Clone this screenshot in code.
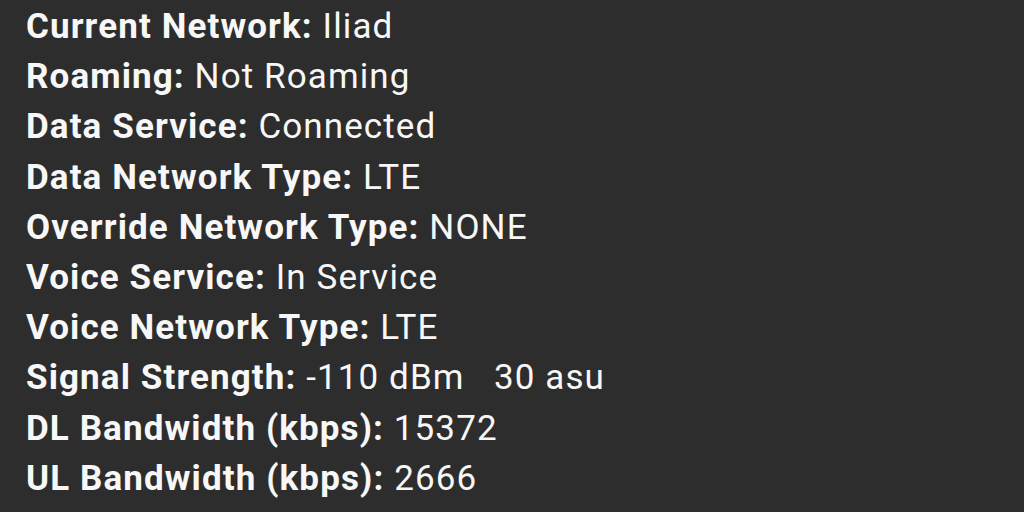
const rows: [string, string][] = [
  ["Current Network:", "Iliad"],
  ["Roaming:", "Not Roaming"],
  ["Data Service:", "Connected"],
  ["Data Network Type:", "LTE"],
  ["Override Network Type:", "NONE"],
  ["Voice Service:", "In Service"],
  ["Voice Network Type:", "LTE"],
  ["Signal Strength:", "-110 dBm\u00a0\u00a0\u00a030 asu"],
  ["DL Bandwidth (kbps):", "15372"],
  ["UL Bandwidth (kbps):", "2666"],
];

export default function App() {
  return (
    <main className="h-[512px] w-[1024px] overflow-hidden bg-[#2d2d2d] pl-[26px] pt-[2px] font-['Roboto',sans-serif] text-[35px] leading-[50.2px] tracking-[1.1px] text-[#f7f7f7]">
      {rows.map(([label, value]) => (
        <p key={label} className="whitespace-pre">
          <span className="font-bold">{label}</span> {value}
        </p>
      ))}
    </main>
  );
}
